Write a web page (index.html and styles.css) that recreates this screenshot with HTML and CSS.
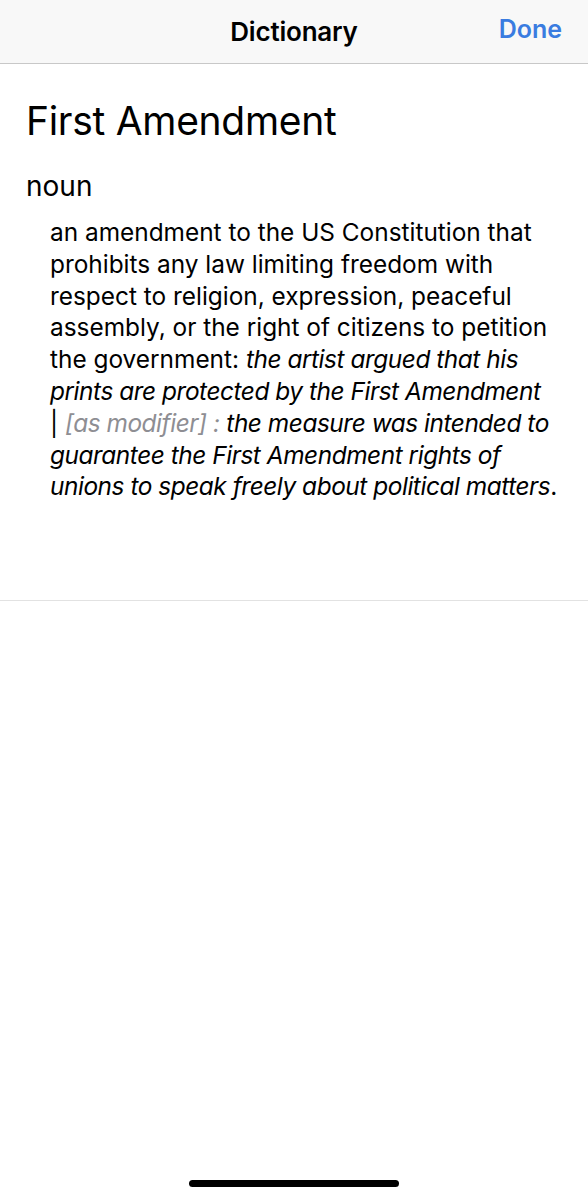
FILE: index.html
```html
<!DOCTYPE html>
<html lang="en">
<head>
<meta charset="utf-8">
<title>Dictionary</title>
<link rel="stylesheet" href="styles.css">
</head>
<body>
<div class="screen">
  <header class="navbar">
    <div class="nav-title">Dictionary</div>
    <div class="nav-done">Done</div>
  </header>
  <section class="entry">
    <h1 class="headword">First Amendment</h1>
    <div class="pos">noun</div>
    <p class="definition">an amendment to the US Constitution that<br>prohibits any law limiting freedom with<br>respect to religion, expression, peaceful<br>assembly, or the right of citizens to petition<br>the government: <i>the artist argued that his<br>prints are protected by the First Amendment</i><br>| <i class="gram">[as modifier] :</i> <i>the measure was intended to<br>guarantee the First Amendment rights of<br>unions to speak freely about political matters</i>.</p>
  </section>
  <div class="spacer"></div>
  <div class="home-indicator"></div>
</div>
</body>
</html>
```
FILE: styles.css
```css
html, body {
  margin: 0;
  padding: 0;
  background: #ffffff;
}
body {
  font-family: Inter, "Noto Sans", "Liberation Sans", sans-serif;
  color: #000000;
}
.screen {
  display: flex;
  flex-direction: column;
  height: 1200px;
}
.navbar {
  height: 64px;
  box-sizing: border-box;
  background: #f8f8f8;
  border-bottom: 1px solid #c8c8c8;
  display: flex;
  align-items: center;
  justify-content: center;
  position: relative;
}
.nav-title {
  font-size: 26px;
  font-weight: 600;
  letter-spacing: -0.2px;
  margin-top: -1px;
}
.nav-done {
  position: absolute;
  right: 26px;
  top: 14px;
  font-size: 25px;
  font-weight: 600;
  color: #3a7ce0;
}
.entry {
  padding: 0 20px 0 26px;
  height: 537px;
  box-sizing: border-box;
  border-bottom: 1px solid #e2e2e2;
}
.headword {
  margin: 34px 0 0 0;
  font-size: 39px;
  font-weight: 400;
  line-height: 46px;
  letter-spacing: -0.3px;
}
.pos {
  margin-top: 26px;
  font-size: 28px;
  line-height: 32px;
}
.definition {
  margin: 15px 0 0 24px;
  font-size: 24.4px;
  line-height: 31.8px;
  white-space: nowrap;
}
.definition i {
  font-style: italic;
  letter-spacing: -0.45px;
}
.definition .gram {
  color: #8e8e93;
}
.spacer {
  flex: 1;
}
.home-indicator {
  align-self: center;
  width: 210px;
  height: 7px;
  border-radius: 4px;
  background: #000000;
  margin-bottom: 13px;
}
```
